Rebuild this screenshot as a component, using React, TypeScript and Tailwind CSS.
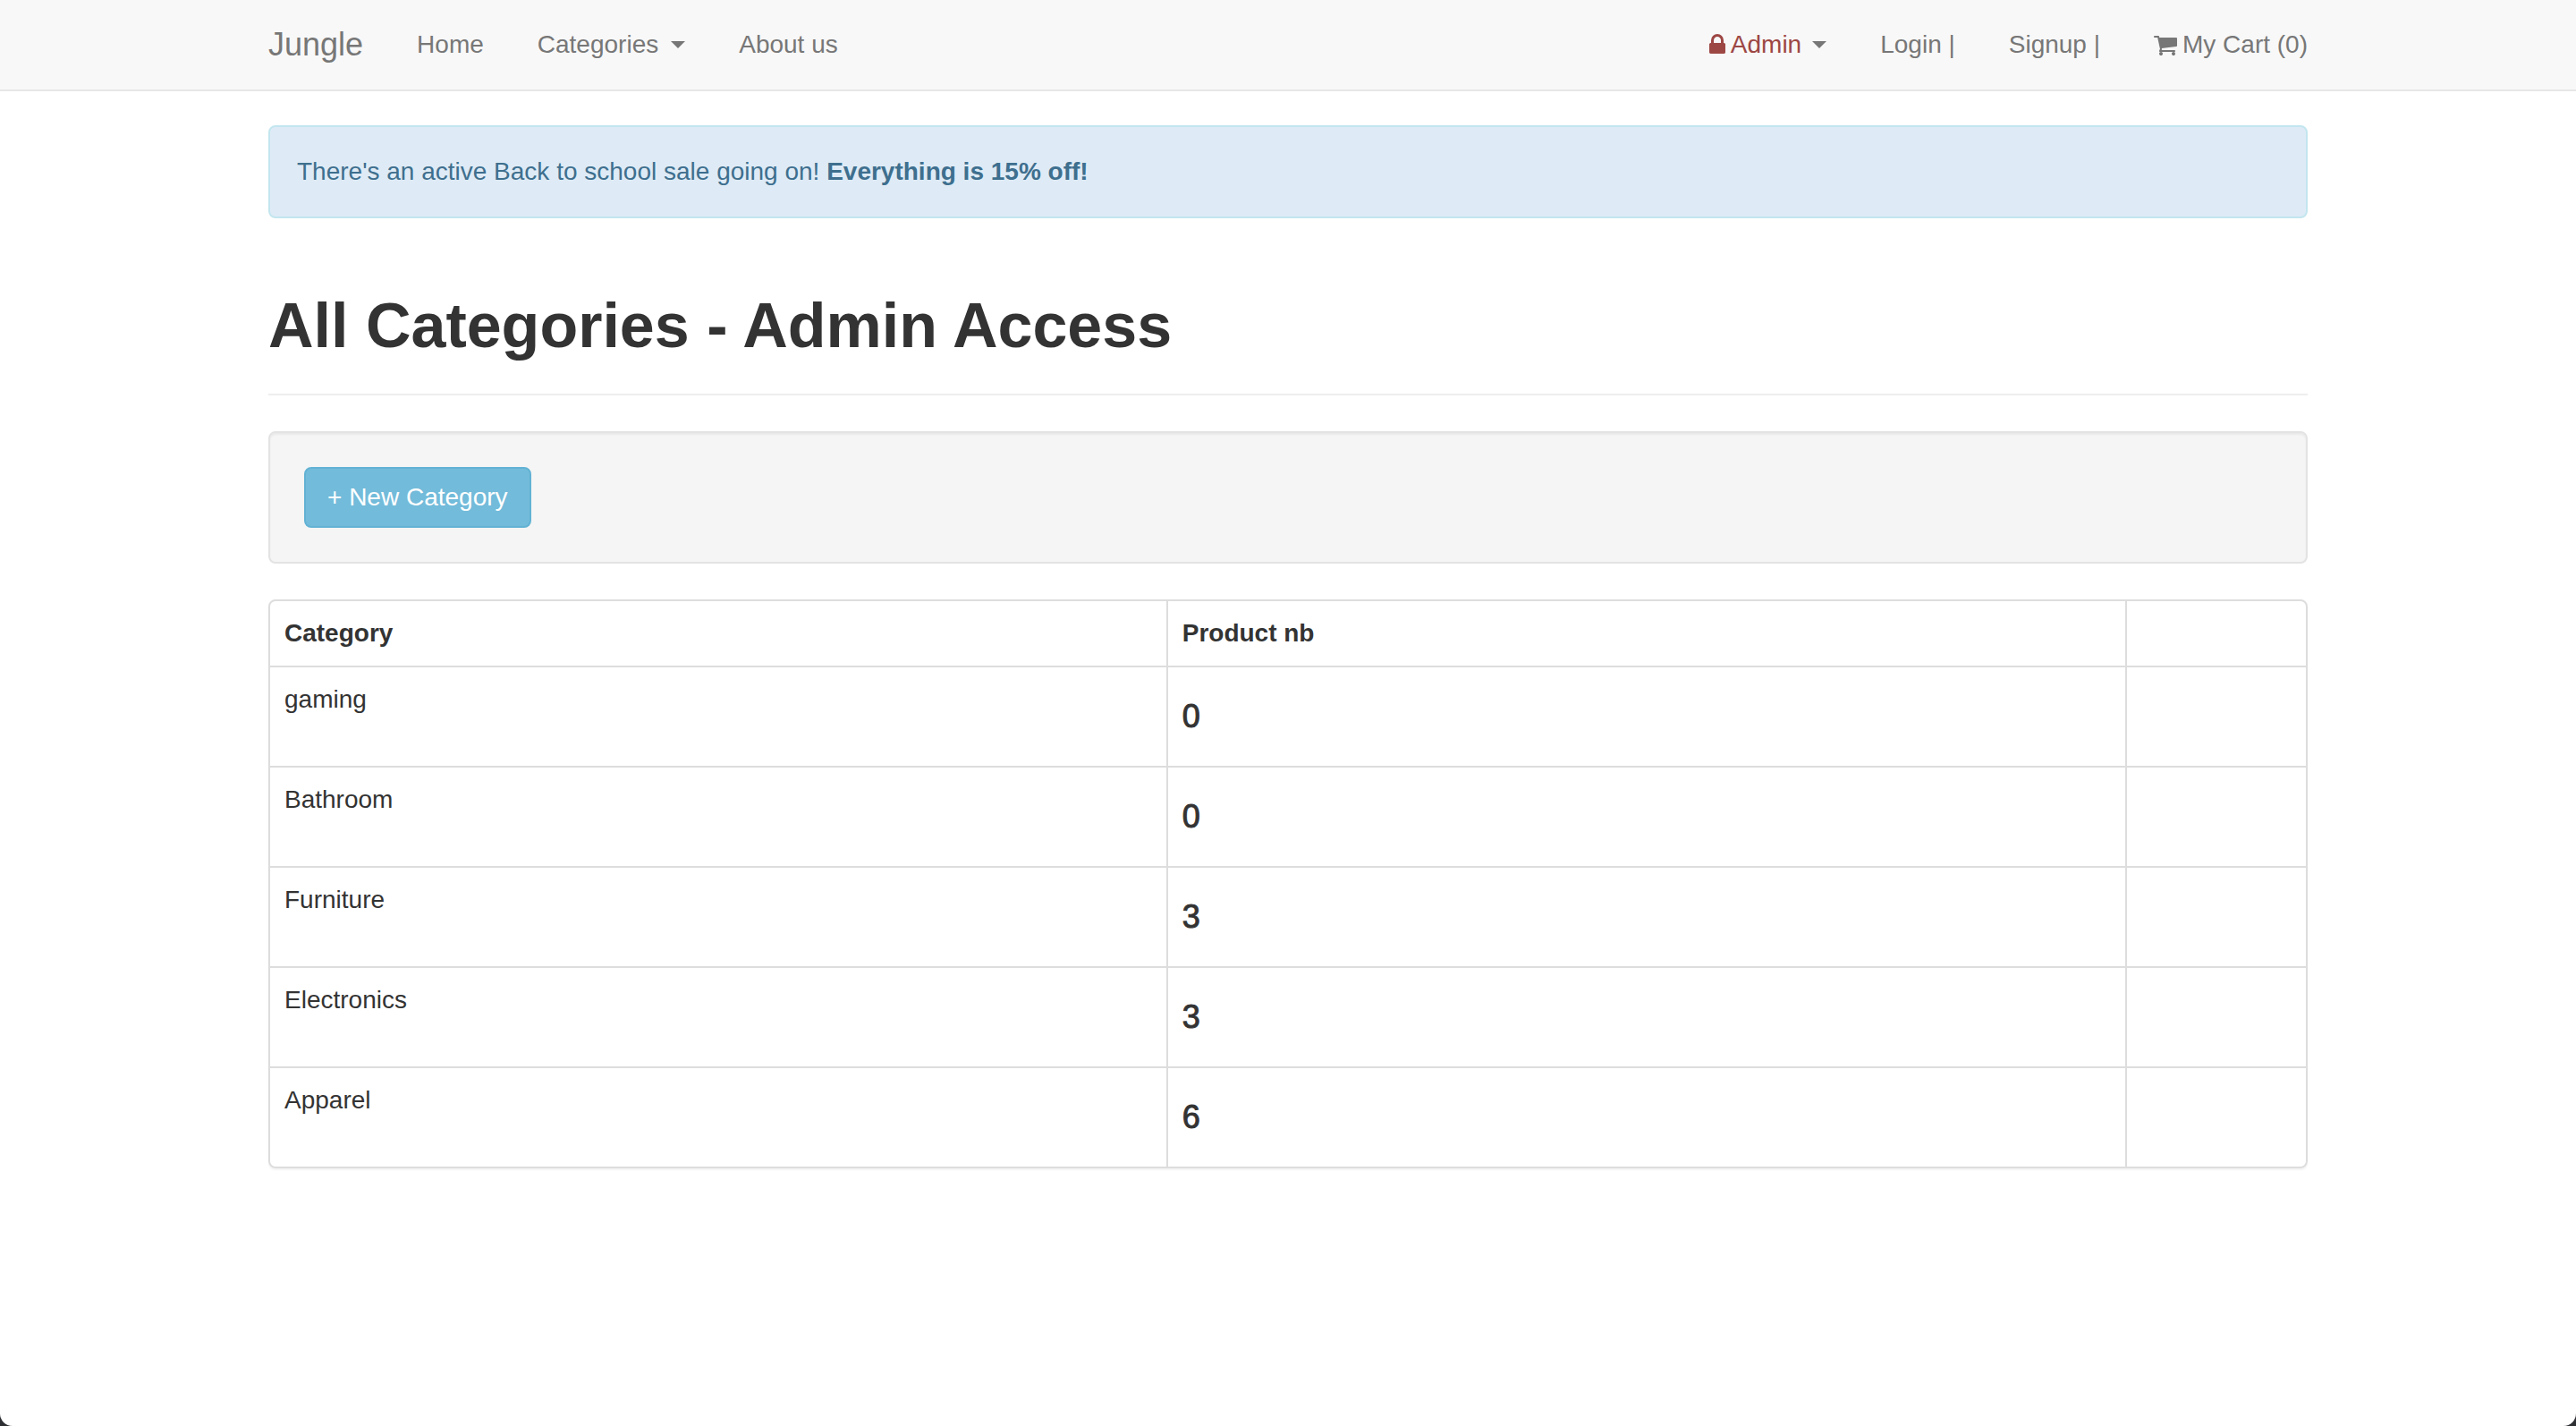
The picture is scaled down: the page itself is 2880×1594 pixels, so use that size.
import type { ReactNode } from "react";

type Category = { name: string; products: number };

const categories: Category[] = [
  { name: "gaming", products: 0 },
  { name: "Bathroom", products: 0 },
  { name: "Furniture", products: 3 },
  { name: "Electronics", products: 3 },
  { name: "Apparel", products: 6 },
];

function LockIcon() {
  return (
    <svg viewBox="320 0 1152 1792" className="h-7 w-[18px] shrink-0 fill-current" aria-hidden="true">
      <path d="M640 768h512v-192q0-106-75-181t-181-75-181 75-75 181v192zm832 96v576q0 40-28 68t-68 28h-960q-40 0-68-28t-28-68v-576q0-40 28-68t68-28h32v-192q0-184 132-316t316-132 316 132 132 316v192h32q40 0 68 28t28 68z" />
    </svg>
  );
}

function CartIcon() {
  return (
    <svg viewBox="64 0 1664 1792" className="h-7 w-[26px] shrink-0 fill-current" aria-hidden="true">
      <path d="M704 1536q0 52-38 90t-90 38-90-38-38-90 38-90 90-38 90 38 38 90zm896 0q0 52-38 90t-90 38-90-38-38-90 38-90 90-38 90 38 38 90zm128-1088v512q0 24-16.500 42.500t-40.500 21.500l-1044 122q13 60 13 70 0 16-24 64h920q26 0 45 19t19 45-19 45-45 19h-1024q-26 0-45-19t-19-45q0-11 8-31.500t16-36 21.500-40 15.500-29.500l-177-823h-204q-26 0-45-19t-19-45 19-45 45-19h256q16 0 28.500 6.500t19.500 15.500 13 24.500 8 26 5.500 29.500 4.500 26h1201q26 0 45 19t19 45z" />
    </svg>
  );
}

function Caret() {
  return (
    <span
      className="ml-1.5 border-x-8 border-t-8 border-x-transparent border-t-[#777777]"
      aria-hidden="true"
    />
  );
}

function NavLink({ children }: { children: ReactNode }) {
  return (
    <a href="#" className="flex items-center gap-1.5 whitespace-nowrap">
      {children}
    </a>
  );
}

function Navbar() {
  return (
    <nav className="border-b-2 border-[#e7e7e7] bg-[#f8f8f8] text-[#777777]">
      <div className="mx-auto flex max-w-[2280px] items-center justify-between py-[30px]">
        <div className="flex items-center gap-[60px]">
          <a href="#" className="text-[36px] leading-10">
            Jungle
          </a>
          <NavLink>Home</NavLink>
          <button type="button" className="flex items-center gap-2">
            Categories
            <Caret />
          </button>
          <NavLink>About us</NavLink>
        </div>
        <div className="flex items-center gap-[60px]">
          <button type="button" className="flex items-center gap-1.5 text-[#9d4744]">
            <LockIcon />
            Admin
            <Caret />
          </button>
          <NavLink>Login |</NavLink>
          <NavLink>Signup |</NavLink>
          <NavLink>
            <CartIcon />
            My Cart (0)
          </NavLink>
        </div>
      </div>
    </nav>
  );
}

function CategoryTable() {
  return (
    <div className="overflow-hidden rounded-lg border-2 border-[#dddddd] shadow-[0_2px_2px_rgba(0,0,0,0.05)]">
      <table className="w-full table-fixed border-separate border-spacing-0 text-left">
        <colgroup>
          <col className="w-[44.1%]" />
          <col className="w-[47.1%]" />
          <col />
        </colgroup>
        <thead>
          <tr>
            <th scope="col" className="border-r-2 border-b-2 border-[#dddddd] p-4 font-bold">
              Category
            </th>
            <th scope="col" className="border-r-2 border-b-2 border-[#dddddd] p-4 font-bold">
              Product nb
            </th>
            <td className="border-b-2 border-[#dddddd] p-4" />
          </tr>
        </thead>
        <tbody className="[&>tr:last-child>td]:border-b-0">
          {categories.map((category) => (
            <tr key={category.name}>
              <td className="border-r-2 border-b-2 border-[#dddddd] p-4 align-top">{category.name}</td>
              <td className="border-r-2 border-b-2 border-[#dddddd] p-4 align-top">
                <h4 className="my-5 text-[36px] leading-[38px] [-webkit-text-stroke:1px_currentColor]">
                  {category.products}
                </h4>
              </td>
              <td className="border-b-2 border-[#dddddd] p-4" />
            </tr>
          ))}
        </tbody>
      </table>
    </div>
  );
}

export default function App() {
  return (
    <div className="min-h-screen bg-[#2d2f33]">
      <div className="min-h-screen rounded-b-[14px] bg-white font-['Helvetica_Neue','Liberation_Sans',Arial,sans-serif] text-[28px] leading-10 text-[#333333]">
        <Navbar />
        <main className="mx-auto max-w-[2280px] pt-[38px]">
          <div
            role="alert"
            className="rounded-lg border-2 border-[#c3e6ef] bg-[#deebf6] p-[30px] text-[#3e6f8e]"
          >
            There's an active Back to school sale going on! <strong>Everything is 15% off!</strong>
          </div>
          <header className="mt-20 mb-10 border-b-2 border-[#eeeeee] pb-9">
            <h1 className="text-[70px] leading-20 font-bold">All Categories - Admin Access</h1>
          </header>
          <div className="mb-10 rounded-lg border-2 border-[#e3e3e3] bg-[#f5f5f5] p-[38px] shadow-[inset_0_2px_2px_rgba(0,0,0,0.05)]">
            <a
              href="#"
              className="block w-fit rounded-lg border-2 border-[#62b2d4] bg-[#73bbda] px-6 py-3 text-white"
            >
              + New Category
            </a>
          </div>
          <CategoryTable />
        </main>
      </div>
    </div>
  );
}
